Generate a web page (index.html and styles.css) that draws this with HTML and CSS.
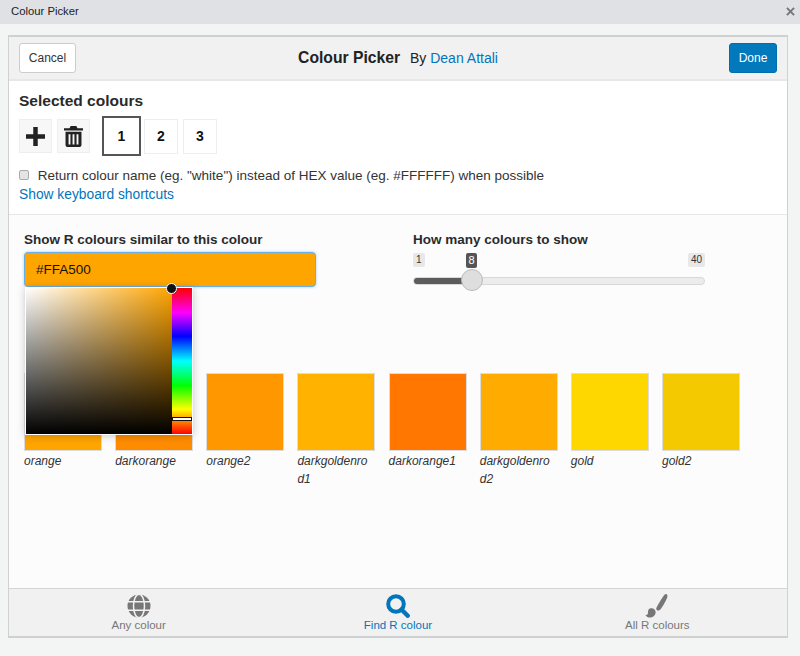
FILE: index.html
```html
<!DOCTYPE html>
<html lang="en">
<head>
<meta charset="utf-8">
<title>Colour Picker</title>
<link rel="stylesheet" href="styles.css">
</head>
<body>
<div class="titlebar">
  <span class="window-title">Colour Picker</span>
  <svg class="close" viewBox="0 0 10 10" width="9" height="9"><path d="M1 1l8 8M9 1l-8 8"/></svg>
</div>
<div class="shell">
  <main class="panel">
    <header class="header">
      <button class="btn">Cancel</button>
      <div class="heading"><strong>Colour Picker</strong> By <a href="#">Dean Attali</a></div>
      <button class="btn btn-primary">Done</button>
    </header>
    <section class="selected">
      <h2 class="selected-title">Selected colours</h2>
      <div class="tools">
        <span class="tool">
          <svg viewBox="0 0 22 22" width="19" height="19"><path class="ico" d="M8.400 0h5.200v8.400H22v5.200h-8.400V22H8.400v-8.400H0V8.400h8.400z"/></svg>
        </span>
        <span class="tool">
          <svg viewBox="0 0 20 22" width="19" height="21"><path class="ico" d="M7 0h6l1.200 2.200H20v2.400H0V2.200h5.800zM1.600 6h16.800v14a2 2 0 0 1-2 2H3.600a2 2 0 0 1-2-2zM4.800 8.500v11h2v-11zm4.200 0v11h2v-11zm4.200 0v11h2v-11z" fill-rule="evenodd"/></svg>
        </span>
        <span class="slot slot-active">1</span>
        <span class="slot">2</span>
        <span class="slot">3</span>
      </div>
      <label class="option"><input class="check" type="checkbox"> Return colour name (eg. "white") instead of HEX value (eg. #FFFFFF) when possible</label>
      <a class="shortcut" href="#">Show keyboard shortcuts</a>
    </section>
    <section class="find">
      <div class="controls">
        <div class="colour-col">
          <div class="field-label">Show R colours similar to this colour</div>
          <div class="colour-input">#FFA500</div>
        </div>
        <div class="slider-col">
          <div class="field-label">How many colours to show</div>
          <div class="slider">
            <span class="tick tick-min">1</span>
            <span class="tick tick-val">8</span>
            <span class="tick tick-max">40</span>
            <div class="track"><div class="fill"></div></div>
            <div class="thumb"></div>
          </div>
        </div>
      </div>
      <div class="picker">
        <div class="sat"><div class="sat-white"></div></div>
        <div class="hue"><span class="hue-mark"></span></div>
        <span class="sat-dot"></span>
      </div>
      <div class="swatches">
        <figure class="swatch"><div class="chip c1"></div><figcaption>orange</figcaption></figure>
        <figure class="swatch"><div class="chip c2"></div><figcaption>darkorange</figcaption></figure>
        <figure class="swatch"><div class="chip c3"></div><figcaption>orange2</figcaption></figure>
        <figure class="swatch"><div class="chip c4"></div><figcaption>darkgoldenrod1</figcaption></figure>
        <figure class="swatch"><div class="chip c5"></div><figcaption>darkorange1</figcaption></figure>
        <figure class="swatch"><div class="chip c6"></div><figcaption>darkgoldenrod2</figcaption></figure>
        <figure class="swatch"><div class="chip c7"></div><figcaption>gold</figcaption></figure>
        <figure class="swatch"><div class="chip c8"></div><figcaption>gold2</figcaption></figure>
      </div>
    </section>
    <nav class="tabs">
      <a class="tab" href="#">
        <svg viewBox="0 0 24 24" width="24" height="24"><circle cx="12" cy="12" r="11.500" fill="#777"/><g class="globe-lines"><ellipse cx="12" cy="12" rx="5.500" ry="11.800"/><path d="M0 7.800h24M0 16.200h24"/></g></svg>
        <span>Any colour</span>
      </a>
      <a class="tab tab-active" href="#">
        <svg viewBox="0 0 24 24" width="24" height="24"><circle cx="10" cy="10" r="7.800" fill="none" stroke="#0275bb" stroke-width="4"/><path d="M15.500 15.500l6.200 6.200" stroke="#0275bb" stroke-width="4.400" stroke-linecap="round"/></svg>
        <span>Find R colour</span>
      </a>
      <a class="tab" href="#">
        <svg viewBox="0 0 24 24" width="24" height="24"><path fill="#777" d="M21.500.2c1.500.6 1 2.800.2 4.500-1.500 3.400-4.300 8.400-6.300 10.800-.8.900-1.700 1.300-2.700 1-1.200-.4-1.700-1.500-1.400-2.600C13 10.500 15.500 6.400 18 2.800 19 1.300 20.300-.3 21.500.2zM4.800 14.600c1.800-.6 3.500-.2 4.700.9 1 1 1.300 2.400 1 3.800-.5 2.400-2.700 4.300-5.300 4.300-2.200 0-3.800-1.200-4.800-2.700 1.500.2 2.400-.4 2.500-1.700.1-1.900.2-3.900 1.900-4.600z"/></svg>
        <span>All R colours</span>
      </a>
    </nav>
  </main>
</div>
</body>
</html>
```
FILE: styles.css
```css
* { box-sizing: border-box; }
html, body { margin: 0; padding: 0; }
body {
  width: 800px;
  height: 656px;
  overflow: hidden;
  background: #f3f5f4;
  color: #262626;
  font-family: "Liberation Sans", Arial, sans-serif;
}
a { color: #0275bb; text-decoration: none; }

.titlebar {
  height: 24px;
  background: #e0e1e5;
  display: flex;
  align-items: center;
  justify-content: space-between;
  padding: 0 5px 2px 11px;
}
.window-title { font-size: 11.300px; color: #222; }
.close { stroke: #777; stroke-width: 2.200; fill: none; }

.shell { padding: 11px 12px 18px 8px; height: 632px; }
.panel {
  height: 603px;
  display: flex;
  flex-direction: column;
  background: #fff;
  border: 1px solid #cfd1d1;
  border-top: 2px solid #cfd1d1;
  border-bottom: 2px solid #cfd1d1;
}

.header {
  height: 44px;
  flex: none;
  display: flex;
  align-items: center;
  justify-content: space-between;
  padding: 0 10px;
  background: #f1f1f1;
  border-bottom: 2px solid #e7e7e7;
}
.btn {
  width: 57px;
  height: 30px;
  padding: 0;
  background: #fff;
  border: 1px solid #ccc;
  border-radius: 3px;
  color: #333;
  font: 12px "Liberation Sans", Arial, sans-serif;
}
.btn-primary {
  width: 48px;
  background: #0279bd;
  border-color: #026ea9;
  color: #fff;
}
.heading { font-size: 14px; color: #222; margin-right: 9px; }
.heading strong { font-size: 15.700px; margin-right: 6px; }

.selected {
  height: 134px;
  flex: none;
  padding: 11px 10px 0;
  border-bottom: 1px solid #e7e7e7;
}
.selected-title { margin: 0; font-size: 15.500px; line-height: 18px; font-weight: bold; color: #2a2a2a; }
.tools {
  display: flex;
  align-items: center;
  height: 40px;
  margin-top: 6px;
}
.tool {
  width: 33px;
  height: 34px;
  margin-right: 5px;
  background: #f7f7f7;
  border: 1px solid #eee;
  display: flex;
  align-items: center;
  justify-content: center;
}
.ico { fill: #222; }
.slot {
  width: 34px;
  height: 35px;
  margin-right: 5px;
  background: #fff;
  border: 1px solid #eee;
  display: flex;
  align-items: center;
  justify-content: center;
  font-size: 14px;
  font-weight: bold;
  color: #111;
}
.slot-active {
  width: 39px;
  height: 40px;
  margin: 0 3px 0 7px;
  border: 2px solid #555;
}
.option {
  display: flex;
  align-items: center;
  height: 20px;
  margin-top: 9px;
  font-size: 13.500px;
  color: #333;
  white-space: pre;
}
.check {
  width: 10px;
  height: 10px;
  margin: 0 5px 0 0;
  appearance: none;
  background: #e4e4e4;
  border: 1px solid #aaa;
  border-radius: 2px;
}
.shortcut { display: block; font-size: 13.800px; line-height: 20px; }

.find {
  position: relative;
  flex: 1;
  background: #fcfcfc;
  padding: 15px 15px 0;
}
.controls { display: flex; }
.colour-col { width: 389px; }
.slider-col { width: 292px; }
.field-label { font-size: 13.500px; line-height: 19px; font-weight: bold; color: #2b2b2b; }
.colour-input {
  width: 292px;
  height: 35px;
  margin-top: 3px;
  padding-left: 11px;
  display: flex;
  align-items: center;
  background: #ffa500;
  border: 1px solid #66afe9;
  border-radius: 4px;
  box-shadow: 0 0 3px rgba(102, 175, 233, .6);
  font-size: 13.500px;
  color: #111;
}
.slider { position: relative; height: 40px; }
.tick {
  position: absolute;
  top: 4px;
  height: 14px;
  padding: 0 3px;
  background: #e8e8e8;
  border-radius: 2px;
  font-size: 10px;
  line-height: 14px;
  color: #333;
}
.tick-min { left: 0; }
.tick-val { left: 53px; width: 11px; padding: 0; text-align: center; height: 15px; background: #555; color: #fff; font-size: 11px; }
.tick-max { right: 0; }
.track {
  position: absolute;
  left: 0;
  right: 0;
  top: 28px;
  height: 8px;
  background: #ececec;
  border: 1px solid #d8d8d8;
  border-radius: 4px;
  overflow: hidden;
}
.fill { width: 58px; height: 100%; background: #5c5c5c; }
.thumb {
  position: absolute;
  left: 48px;
  top: 20px;
  width: 22px;
  height: 22px;
  background: #dedede;
  border: 1px solid #bbb;
  border-radius: 50%;
}

.picker {
  position: absolute;
  left: 16px;
  top: 72px;
  width: 168px;
  height: 148px;
  padding: 1px;
  display: flex;
  background: #fff;
  box-shadow: 0 1px 8px rgba(0, 0, 0, .22);
  z-index: 2;
}
.sat {
  width: 146px;
  height: 146px;
  background: linear-gradient(to right, #fff, #ffa500);
  position: relative;
}
.sat-white {
  position: absolute;
  inset: 0;
  background: linear-gradient(to bottom, transparent, #000);
}
.hue {
  position: relative;
  width: 20px;
  height: 146px;
  background: linear-gradient(to bottom, #f00 0%, #f0f 17%, #00f 33%, #0ff 50%, #0f0 67%, #ff0 83%, #f00 100%);
}
.hue-mark {
  position: absolute;
  left: 0;
  right: 0;
  top: 129px;
  height: 4px;
  background: #fff;
  border: 1px solid #111;
}
.sat-dot {
  position: absolute;
  left: 141px;
  top: -4px;
  width: 11px;
  height: 11px;
  background: #111;
  border: 1px solid #fff;
  border-radius: 50%;
}

.swatches {
  display: flex;
  gap: 13.150px;
  margin-top: 84px;
}
.swatch { width: 78px; margin: 0; }
.chip { height: 78px; border: 1px solid #dcdcdc; }
.swatch figcaption {
  margin-top: 1px;
  padding-right: 2px;
  font-size: 12px;
  line-height: 18px;
  font-style: italic;
  color: #333;
  overflow-wrap: anywhere;
}
.c1 { background: #ffa500; }
.c2 { background: #ff8c00; }
.c3 { background: #ff9800; }
.c4 { background: #ffb300; }
.c5 { background: #ff7600; }
.c6 { background: #ffab00; }
.c7 { background: #ffd700; }
.c8 { background: #f4c900; }

.tabs {
  height: 48px;
  flex: none;
  display: flex;
  background: #f1f1f1;
  border-top: 1px solid #d6d6d6;
}
.tab {
  flex: 1;
  display: flex;
  flex-direction: column;
  align-items: center;
  padding-top: 5px;
  color: #777;
  font-size: 11.500px;
  line-height: 14px;
}
.tab-active { color: #0275bb; }
.globe-lines { fill: none; stroke: #f1f1f1; stroke-width: 1.500; }
```
